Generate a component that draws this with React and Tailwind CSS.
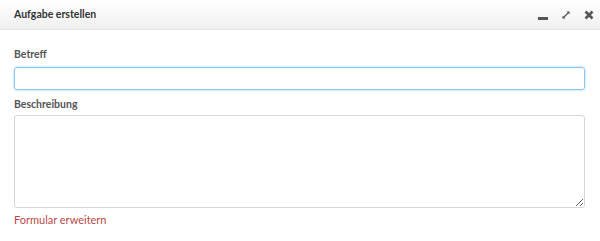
import { useState } from 'react'

function HeaderIcons() {
  return (
    <div className="flex items-center gap-[13px] text-[#555]">
      <svg width="10" height="10" viewBox="0 0 10 10" className="mt-[3px]">
        <rect x="0" y="6" width="10" height="3" fill="currentColor" />
      </svg>
      <svg width="10" height="10" viewBox="0 0 10 10">
        <path d="M2 8 L8 2" stroke="currentColor" strokeWidth="1.2" />
        <path d="M5.5 1.5 H8.5 V4.5 Z" fill="currentColor" />
        <path d="M1.5 5.5 V8.5 H4.5 Z" fill="currentColor" />
      </svg>
      <svg width="10" height="10" viewBox="0 0 10 10">
        <path d="M1.5 1.5 L8.5 8.5 M8.5 1.5 L1.5 8.5" stroke="currentColor" strokeWidth="2.6" />
      </svg>
    </div>
  )
}

export default function App() {
  const [subject, setSubject] = useState('')
  const [description, setDescription] = useState('')

  return (
    <div className="w-[600px] h-[241px] bg-white overflow-hidden" style={{ fontFamily: 'Lato, "Open Sans", sans-serif' }}>
      <div className="h-[30px] flex items-center justify-between pl-[14px] pr-[6px] bg-gradient-to-b from-white to-[#f0f0f0] border-b border-[#e2e2e2]">
        <span className="text-[10.5px] font-bold text-[#333]">Aufgabe erstellen</span>
        <HeaderIcons />
      </div>
      <div className="px-[14px] pt-[17px]">
        <label className="block text-[10.5px] font-bold text-[#555] leading-[15px]">Betreff</label>
        <input
          autoFocus
          value={subject}
          onChange={(e) => setSubject(e.target.value)}
          className="mt-[5px] block w-[571px] h-[23px] rounded-[3px] border border-[#8ec5f0] shadow-[0_0_3px_#a9d4f5] outline-none px-2 text-[12px]"
        />
        <label className="block mt-[7px] text-[10.5px] font-bold text-[#555] leading-[15px]">Beschreibung</label>
        <textarea
          value={description}
          onChange={(e) => setDescription(e.target.value)}
          className="mt-[3px] block w-[571px] h-[93px] rounded-[3px] border border-[#d6d6d6] outline-none px-2 py-1 text-[12px] resize-y"
        />
        <a href="#" className="block mt-[4px] text-[11px] text-[#b94a48] leading-[16px]">Formular erweitern</a>
      </div>
    </div>
  )
}
